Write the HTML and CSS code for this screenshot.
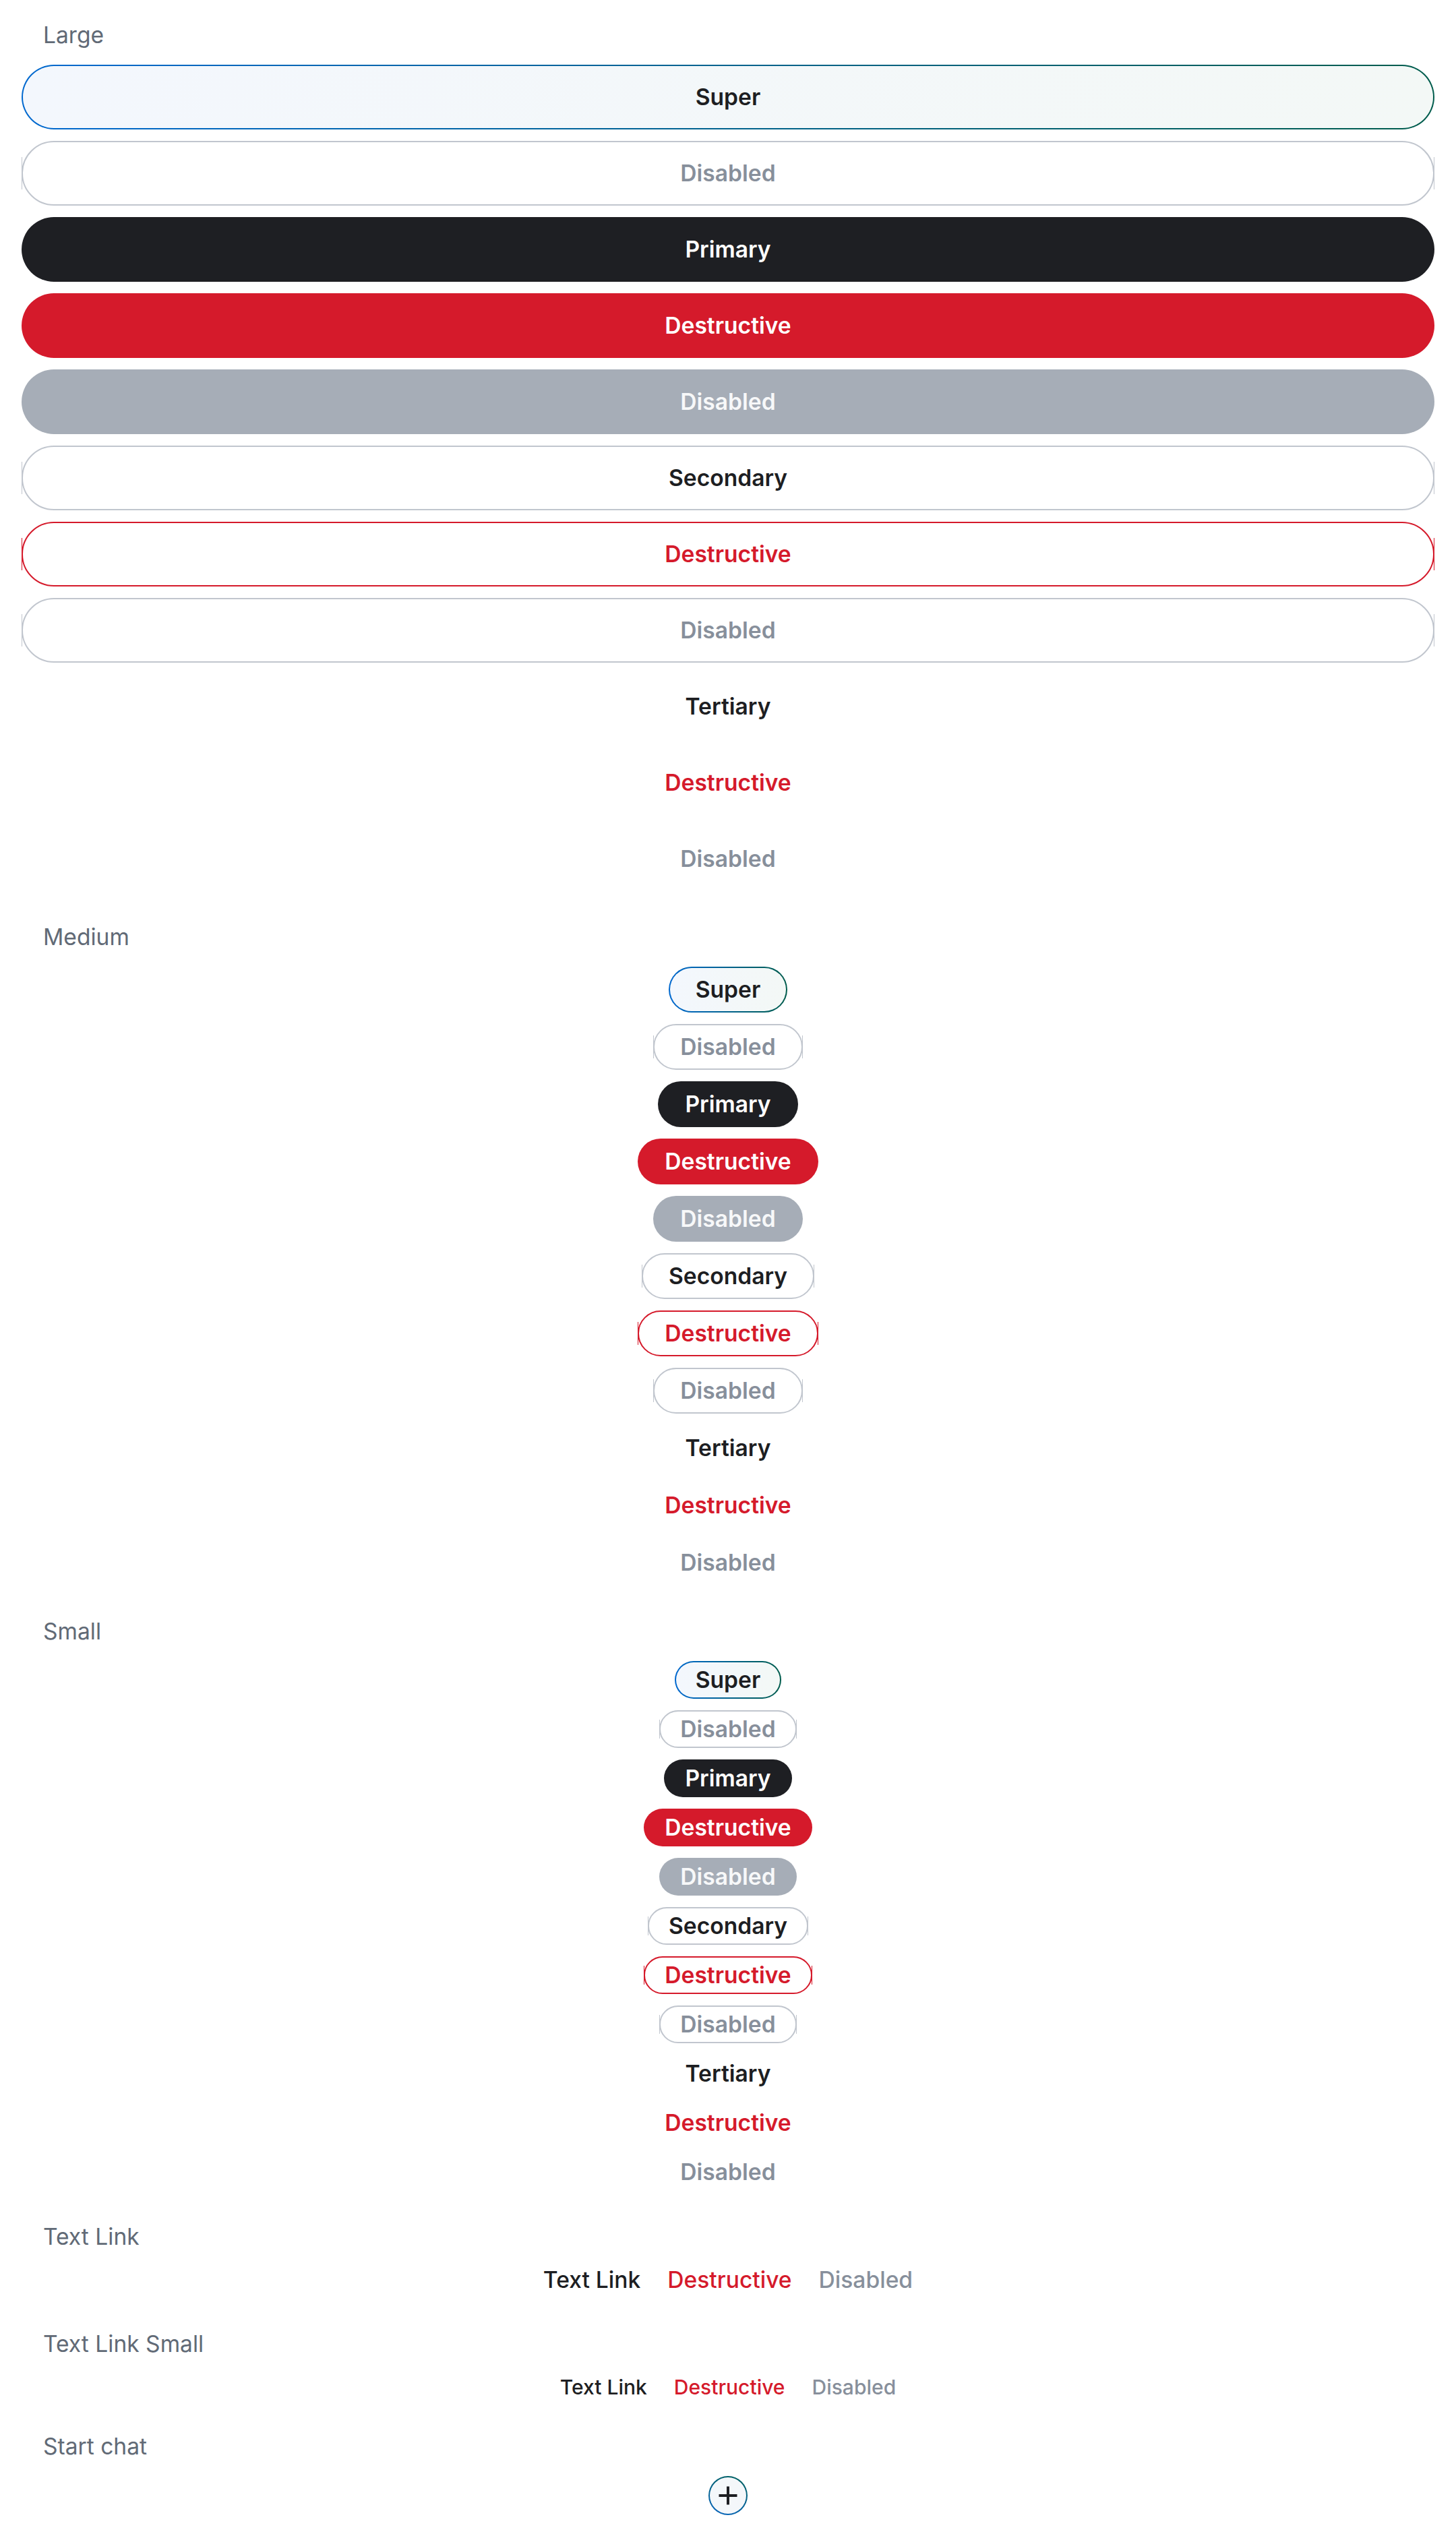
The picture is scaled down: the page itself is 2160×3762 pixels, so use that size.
FILE: index.html
```html
<!DOCTYPE html>
<html lang="en">
<head>
<meta charset="utf-8">
<title>Buttons</title>
<link rel="stylesheet" href="styles.css">
</head>
<body>
  <section class="group">
    <div class="label">Large</div>
    <div class="stack stack-lg">
      <button class="btn super">Super</button>
      <button class="btn outline muted">Disabled</button>
      <button class="btn primary">Primary</button>
      <button class="btn danger">Destructive</button>
      <button class="btn disabled-fill">Disabled</button>
      <button class="btn outline secondary">Secondary</button>
      <button class="btn outline danger-outline">Destructive</button>
      <button class="btn outline muted">Disabled</button>
      <button class="btn tertiary">Tertiary</button>
      <button class="btn tertiary danger-text">Destructive</button>
      <button class="btn tertiary muted-text">Disabled</button>
    </div>
  </section>

  <section class="group">
    <div class="label">Medium</div>
    <div class="stack stack-md">
      <button class="btn super">Super</button>
      <button class="btn outline muted">Disabled</button>
      <button class="btn primary">Primary</button>
      <button class="btn danger">Destructive</button>
      <button class="btn disabled-fill">Disabled</button>
      <button class="btn outline secondary">Secondary</button>
      <button class="btn outline danger-outline">Destructive</button>
      <button class="btn outline muted">Disabled</button>
      <button class="btn tertiary">Tertiary</button>
      <button class="btn tertiary danger-text">Destructive</button>
      <button class="btn tertiary muted-text">Disabled</button>
    </div>
  </section>

  <section class="group">
    <div class="label">Small</div>
    <div class="stack stack-sm">
      <button class="btn super">Super</button>
      <button class="btn outline muted">Disabled</button>
      <button class="btn primary">Primary</button>
      <button class="btn danger">Destructive</button>
      <button class="btn disabled-fill">Disabled</button>
      <button class="btn outline secondary">Secondary</button>
      <button class="btn outline danger-outline">Destructive</button>
      <button class="btn outline muted">Disabled</button>
      <button class="btn tertiary">Tertiary</button>
      <button class="btn tertiary danger-text">Destructive</button>
      <button class="btn tertiary muted-text">Disabled</button>
    </div>
  </section>

  <section class="group">
    <div class="label">Text Link</div>
    <div class="links links-lg">
      <a class="link">Text Link</a>
      <a class="link link-danger">Destructive</a>
      <a class="link link-muted">Disabled</a>
    </div>
  </section>

  <section class="group">
    <div class="label">Text Link Small</div>
    <div class="links links-sm">
      <a class="link">Text Link</a>
      <a class="link link-danger">Destructive</a>
      <a class="link link-muted">Disabled</a>
    </div>
  </section>

  <section class="group">
    <div class="label">Start chat</div>
    <div class="chat-row">
      <button class="chat-btn" aria-label="Start chat">
        <svg width="30" height="30" viewBox="0 0 30 30" aria-hidden="true">
          <path d="M15 1.5 V28.5 M1.5 15 H28.5" stroke="#1d1e22" stroke-width="4" fill="none"/>
        </svg>
      </button>
    </div>
  </section>
</body>
</html>
```

FILE: styles.css
```css
* {
  box-sizing: border-box;
}

body {
  margin: 0;
  padding: 32px 32px 0;
  background: #ffffff;
  font-family: Inter, "Noto Sans", "Liberation Sans", sans-serif;
  color: #1d1e22;
}

.group {
  margin-bottom: 48px;
}

.label {
  padding-left: 32px;
  font-size: 33.6px;
  line-height: 40px;
  font-weight: 400;
  color: #616a76;
  margin-bottom: 24px;
}

.stack {
  display: flex;
  flex-direction: column;
  gap: 17px;
}

.stack-md,
.stack-sm {
  align-items: center;
}

.btn {
  position: relative;
  display: flex;
  align-items: center;
  justify-content: center;
  margin: 0;
  border: 2px solid transparent;
  border-radius: 999px;
  background: transparent;
  font-family: inherit;
  font-size: 33.6px;
  font-weight: 600;
  line-height: 1;
  white-space: nowrap;
  color: #1d1e22;
  cursor: pointer;
}

.stack-lg .btn {
  height: 96px;
  width: 100%;
  padding: 0;
}

.stack-md .btn {
  height: 68px;
  padding: 0 38px;
}

.stack-sm .btn {
  height: 56px;
  padding: 0 29px;
}

.super {
  background:
    linear-gradient(90deg, #f3f7fd, #f3f8f6) padding-box,
    linear-gradient(90deg, #0068cf, #005c4c) border-box;
  color: #1d1e22;
}

.primary {
  background: #1e1f23;
  color: #ffffff;
}

.danger {
  background: #d51a2b;
  color: #ffffff;
}

.disabled-fill {
  background: #a6adb7;
  color: #f7f8f9;
}

.outline {
  background: #ffffff;
  border-color: #c1c6ce;
  --edge: #c1c6ce;
}

.outline::before,
.outline::after {
  content: "";
  position: absolute;
  top: 24%;
  bottom: 24%;
  width: 1px;
  background: var(--edge);
}

.outline::before {
  left: -2px;
}

.outline::after {
  right: -2px;
}

.secondary {
  color: #1d1e22;
}

.danger-outline {
  border-color: #d51a2b;
  --edge: #d51a2b;
  color: #d51a2b;
}

.muted {
  color: #878f9b;
}

.tertiary {
  background: none;
  border-color: transparent;
  color: #1d1e22;
}

.danger-text {
  color: #d51a2b;
}

.muted-text {
  color: #878f9b;
}

.links {
  display: flex;
  justify-content: center;
  align-items: flex-start;
  gap: 40px;
}

.links-lg {
  height: 47px;
  font-size: 33.6px;
  line-height: 40px;
}

.links-sm {
  height: 40px;
  font-size: 30px;
  line-height: 40px;
}

.link {
  font-weight: 500;
  color: #1d1e22;
  text-decoration: none;
}

.link-danger {
  color: #d51a2b;
}

.link-muted {
  color: #878f9b;
}

.chat-row {
  display: flex;
  justify-content: center;
}

.chat-btn {
  display: flex;
  align-items: center;
  justify-content: center;
  width: 58px;
  height: 58px;
  padding: 0;
  border: 2px solid transparent;
  border-radius: 50%;
  background:
    linear-gradient(#f4f7fa, #f4f7fa) padding-box,
    linear-gradient(20deg, #0a66c2, #00605a) border-box;
  cursor: pointer;
}
```
